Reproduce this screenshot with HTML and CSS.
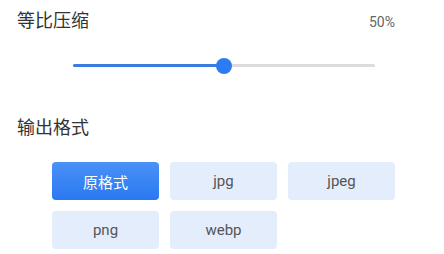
FILE: index.html
```html
<!DOCTYPE html>
<html lang="zh">
<head>
  <title>压缩设置</title>
  <link rel="stylesheet" href="styles.css">
</head>
<body>

<!-- 等比压缩 -->
<section class="block">
  <div class="row-head">
    <h2 class="label">等比压缩</h2>
    <span class="value">50%</span>
  </div>
  <div class="slider">
    <div class="track">
      <div class="fill" style="width:50%"></div>
      <div class="thumb" style="left:50%"></div>
    </div>
  </div>
</section>

<!-- 输出格式 -->
<section class="block formats">
  <h2 class="label">输出格式</h2>
  <div class="options">
    <button class="opt active">原格式</button>
    <button class="opt">jpg</button>
    <button class="opt">jpeg</button>
    <button class="opt">png</button>
    <button class="opt">webp</button>
  </div>
</section>

</body>
</html>
```

FILE: styles.css
```css
body {
  margin: 0;
  padding: 8px 17px 0 17px;
  font-family: Roboto, "Noto Sans CJK SC", sans-serif;
  background: #fff;
  color: #333;
  width: 410px;
}
.row-head {
  display: flex;
  justify-content: space-between;
  align-items: center;
  padding-right: 32px;
}
.label {
  margin: 0;
  font-size: 18px;
  font-weight: normal;
  line-height: 26px;
  color: #333;
}
.value {
  font-size: 14px;
  color: #666;
  margin-top: 2px;
}
.slider {
  padding: 30px 52px 0 56px;
}
.track {
  position: relative;
  height: 3px;
  background: #dcdcdc;
  border-radius: 2px;
}
.fill {
  height: 100%;
  background: #3a7de0;
  border-radius: 2px;
}
.thumb {
  position: absolute;
  top: -6px;
  width: 16px;
  height: 16px;
  margin-left: -8px;
  border-radius: 50%;
  background: #2b7cf0;
}
.formats {
  margin-top: 48px;
}
.options {
  display: grid;
  grid-template-columns: repeat(3, 107px);
  gap: 11px;
  padding: 21px 0 0 35px;
}
.opt {
  height: 38px;
  border: none;
  border-radius: 4px;
  background: #e4edfc;
  color: #555;
  font-family: Roboto, "Noto Sans CJK SC", sans-serif;
  font-size: 15px;
  cursor: pointer;
}
.opt.active {
  background: linear-gradient(#4a91f7, #2a78f2);
  color: #fff;
}
```
